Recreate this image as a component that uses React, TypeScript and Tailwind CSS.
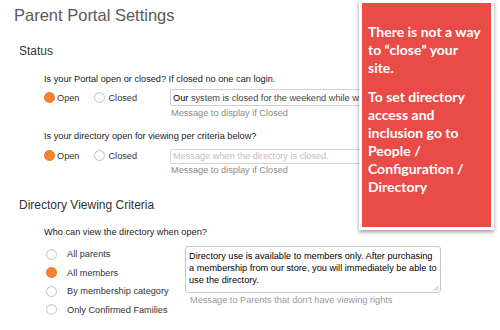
import type { ReactNode } from "react";

function Radio({ checked }: { checked?: boolean }) {
  if (checked) {
    return (
      <span className="block w-[11px] h-[11px] shrink-0 rounded-full bg-[#f5822f] border border-[#ec7526]" />
    );
  }
  return (
    <span className="block w-[11px] h-[11px] shrink-0 rounded-full bg-white border border-[#c4c4c4] shadow-[inset_0_1px_1px_rgba(0,0,0,0.06)]" />
  );
}

function OpenClosed({ open }: { open: boolean }) {
  return (
    <div className="w-[126px] h-[17px] flex items-center text-[#333]">
      <Radio checked={open} />
      <span className="ml-[2px] leading-[12px]">Open</span>
      <span className="ml-[15px]">
        <Radio checked={!open} />
      </span>
      <span className="ml-[3px] leading-[12px]">Closed</span>
    </div>
  );
}

function Hint({ children, className }: { children: ReactNode; className?: string }) {
  return (
    <p className={"leading-[11px] text-[#8a8a8a] " + (className ?? "")}>{children}</p>
  );
}

export default function App() {
  return (
    <div className="relative w-[500px] h-[330px] overflow-hidden bg-white font-['Liberation_Sans',Arial,sans-serif]">
      <h1 className="pl-[14px] pt-[5px] text-[16.5px] leading-[20px] text-[#5a5a5a]">
        Parent Portal Settings
      </h1>

      {/* Status */}
      <h2 className="mt-[18px] pl-[19px] text-[12px] leading-[16px] text-[#333]">Status</h2>
      <div className="pl-[44px] text-[9.2px]">
        <p className="mt-[14px] leading-[12px] text-[#222]">
          Is your Portal open or closed? If closed no one can login.
        </p>
        <div className="mt-[4px] flex items-start">
          <OpenClosed open />
          <div className="flex flex-col">
            <div className="w-[240px] h-[17px] overflow-hidden rounded-[2px] border border-[#cfcfcf] px-[2px] pt-[3px] leading-[11px] text-[#444]">
              <span className="text-black">Our</span> system is closed for the weekend while we
              perform maintenance. We will be back online Monday morning.
            </div>
            <Hint className="mt-[2px] pl-[1px]">Message to display if Closed</Hint>
          </div>
        </div>

        <p className="mt-[11px] leading-[12px] text-[#222]">
          Is your directory open for viewing per criteria below?
        </p>
        <div className="mt-[7px] flex items-start">
          <div className="-mt-[2px]">
            <OpenClosed open />
          </div>
          <div className="flex flex-col">
            <div className="w-[240px] h-[15px] rounded-[2px] border border-[#d4d4d4] px-[2px] leading-[13px] text-[#bdbdbd]">
              Message when the directory is closed.
            </div>
            <Hint className="mt-[1px] pl-[1px]">Message to display if Closed</Hint>
          </div>
        </div>
      </div>

      {/* Directory Viewing Criteria */}
      <h2 className="mt-[21px] pl-[19px] text-[12px] leading-[16px] text-[#333]">
        Directory Viewing Criteria
      </h2>
      <div className="pl-[44px] text-[9.2px]">
        <p className="mt-[13px] leading-[12px] text-[#222]">Who can view the directory when open?</p>
        <div className="mt-[7px] flex items-start">
          <ul className="w-[141px] pl-[2px] text-[#333]">
            {[
              ["All parents", false],
              ["All members", true],
              ["By membership category", false],
              ["Only Confirmed Families", false],
            ].map(([label, on]) => (
              <li key={label as string} className="h-[18.5px] flex items-center gap-[10px]">
                <Radio checked={on as boolean} />
                <span className="leading-[12px]">{label as string}</span>
              </li>
            ))}
          </ul>
          <div className="mt-[1px] flex flex-col">
            <div className="relative w-[256px] h-[47px] rounded-[3px] border border-[#c8c8c8] px-[3px] pt-[3px] leading-[12px] text-black">
              Directory use is available to members only. After purchasing a membership from our
              store, you will immediately be able to use the directory.
              <svg
                className="absolute right-[1px] bottom-[1px]"
                width="6"
                height="6"
                viewBox="0 0 6 6"
              >
                <path d="M5.5 1 L1 5.5 M5.5 3.5 L3.5 5.5" stroke="#9a9a9a" strokeWidth="0.8" />
              </svg>
            </div>
            <Hint className="mt-[2px] pl-[5px] text-[#999]">
              Message to Parents that don't have viewing rights
            </Hint>
          </div>
        </div>
      </div>

      {/* annotation callout */}
      <div className="absolute left-[359px] top-0 w-[135px] h-[230px] border-[3px] border-white bg-[#e94c47] shadow-[0_2px_4px_rgba(0,0,0,0.4)] pl-[6px] pr-[9px] pt-[20px] font-['Lato',sans-serif] font-bold text-[14px] leading-[18px] text-white">
        <p>There is not a way to “close” your site.</p>
        <p className="mt-[11px]">
          To set directory access and inclusion go to People / Configuration / Directory
        </p>
      </div>
    </div>
  );
}
